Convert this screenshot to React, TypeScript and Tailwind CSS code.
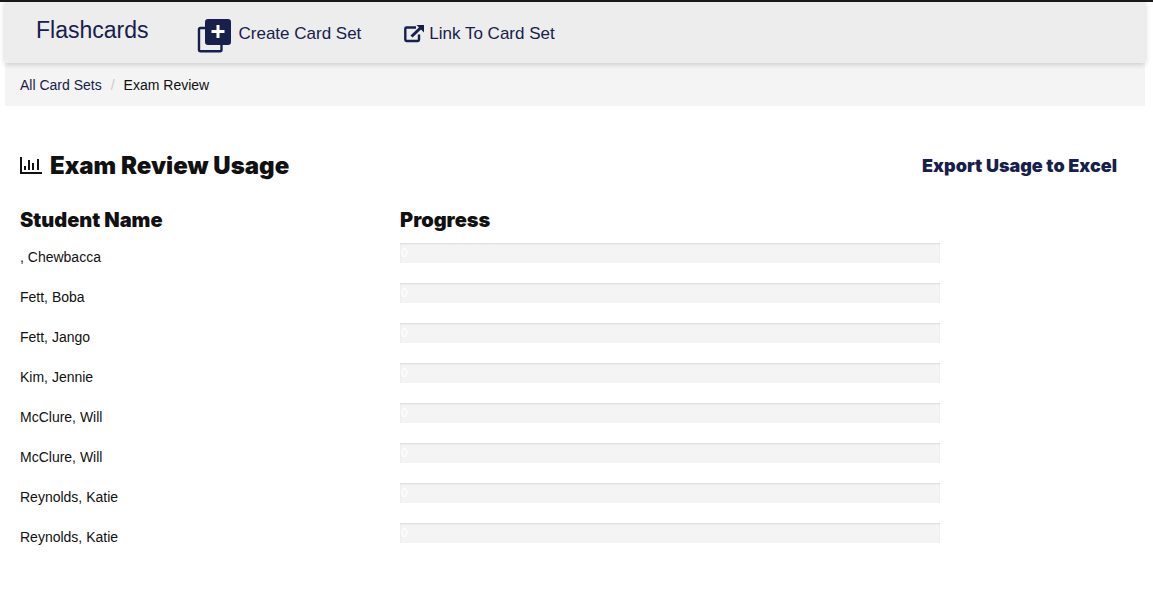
const students = [
  { id: 1, name: ', Chewbacca', progress: 0 },
  { id: 2, name: 'Fett, Boba', progress: 0 },
  { id: 3, name: 'Fett, Jango', progress: 0 },
  { id: 4, name: 'Kim, Jennie', progress: 0 },
  { id: 5, name: 'McClure, Will', progress: 0 },
  { id: 6, name: 'McClure, Will', progress: 0 },
  { id: 7, name: 'Reynolds, Katie', progress: 0 },
  { id: 8, name: 'Reynolds, Katie', progress: 0 },
];

function CreateSetIcon() {
  return (
    <svg className="mt-1 size-9" viewBox="0 0 36 36" fill="none" aria-hidden="true">
      <path d="M10 10H4.500Q3 10 3 11.500V31.700Q3 33.200 4.500 33.200H24Q25.500 33.200 25.500 31.700V25" stroke="#17204c" strokeWidth="2.4" />
      <rect x="9" y="1" width="26" height="26" rx="3" fill="#17204c" />
      <path d="M22 7V20M15.500 13.500H28.500" stroke="#fff" strokeWidth="3" />
    </svg>
  );
}

function LinkOutIcon() {
  return (
    <svg className="h-[18px] w-5" viewBox="0 0 20 18" fill="none" aria-hidden="true">
      <path d="M12 2.500H2.500Q1.300 2.500 1.300 3.700V14.800Q1.300 16 2.500 16H13.800Q15 16 15 14.800V9.500" stroke="#17204c" strokeWidth="2.400" />
      <path d="M7.500 11.500L17 2.500" stroke="#17204c" strokeWidth="3" />
      <path d="M12.500 0H20V7.500Z" fill="#17204c" />
    </svg>
  );
}

function ChartIcon() {
  return (
    <svg className="h-[18px] w-[22px]" viewBox="0 0 22 18" fill="none" aria-hidden="true">
      <path d="M1 0V16H22" stroke="#111" strokeWidth="2" />
      <path d="M5 9V13M9 3V13M13 6V13M18 2V13" stroke="#111" strokeWidth="2" />
    </svg>
  );
}

function ProgressBar({ value, label }: { value: number; label: string }) {
  return (
    <div
      role="progressbar"
      aria-label={label}
      aria-valuenow={value}
      aria-valuemin={0}
      aria-valuemax={100}
      className="h-5 bg-[#f4f4f4] pl-px text-xs leading-5 text-white shadow-[inset_0_1px_2px_rgba(0,0,0,0.1)]"
    >
      <div className="h-5 bg-[#17204c] whitespace-nowrap" style={{ width: `${value}%` }}>
        {value}
      </div>
    </div>
  );
}

export default function App() {
  return (
    <div className="border-t-2 border-[#1c1a1b] bg-white pr-2 pl-[5px] font-['Liberation_Sans',Arial,sans-serif] text-sm text-[#111]">
      <header className="relative bg-[#ededed] pl-[31px] text-[#17204c] shadow-[0_1px_6px_rgba(0,0,0,0.2)]">
        <nav className="flex h-[61px] items-center pt-[3px]">
          <a href="#home" className="mr-12 pb-2 text-[23px] leading-7">Flashcards</a>
          <a href="#create" className="flex items-center gap-[6px] text-[17px] leading-6">
            <CreateSetIcon />
            <span>Create Card Set</span>
          </a>
          <a href="#link" className="ml-[43px] flex items-center gap-[5px] text-[17px] leading-6">
            <LinkOutIcon />
            <span>Link To Card Set</span>
          </a>
        </nav>
      </header>
      <nav aria-label="Breadcrumb" className="bg-[#f4f4f4] px-[15px] pt-[13px] pb-[11px] leading-[19px]">
        <ol className="flex">
          <li><a href="#sets" className="text-[#17204c]">All Card Sets</a></li>
          <li aria-hidden="true" className="px-[9px] text-[#ccc]">/</li>
          <li aria-current="page">Exam Review</li>
        </ol>
      </nav>
      <main className="pt-11">
        <div className="flex items-center justify-between pr-7 pl-[15px] font-['Arial_Black',Inter,sans-serif] font-black">
          <h1 className="flex items-center gap-2 text-2xl leading-8">
            <ChartIcon />
            <span>Exam Review Usage</span>
          </h1>
          <a href="#export" className="text-lg leading-8 text-[#17204c]">Export Usage to Excel</a>
        </div>
        <table className="mt-5 w-full table-fixed text-left">
          <thead className="font-['Arial_Black',Inter,sans-serif] text-xl leading-7">
            <tr>
              <th className="w-1/3 px-[15px] pt-1 pb-[9px] font-black">Student Name</th>
              <th className="w-1/2 px-[15px] pt-1 pb-[9px] font-black">Progress</th>
              <td />
            </tr>
          </thead>
          <tbody>
            {students.map((student) => (
              <tr key={student.id} className="h-10 align-top">
                <td className="px-[15px] pt-1 leading-5">{student.name}</td>
                <td className="px-[15px]">
                  <ProgressBar value={student.progress} label={`Progress of ${student.name}`} />
                </td>
                <td />
              </tr>
            ))}
          </tbody>
        </table>
      </main>
    </div>
  );
}
